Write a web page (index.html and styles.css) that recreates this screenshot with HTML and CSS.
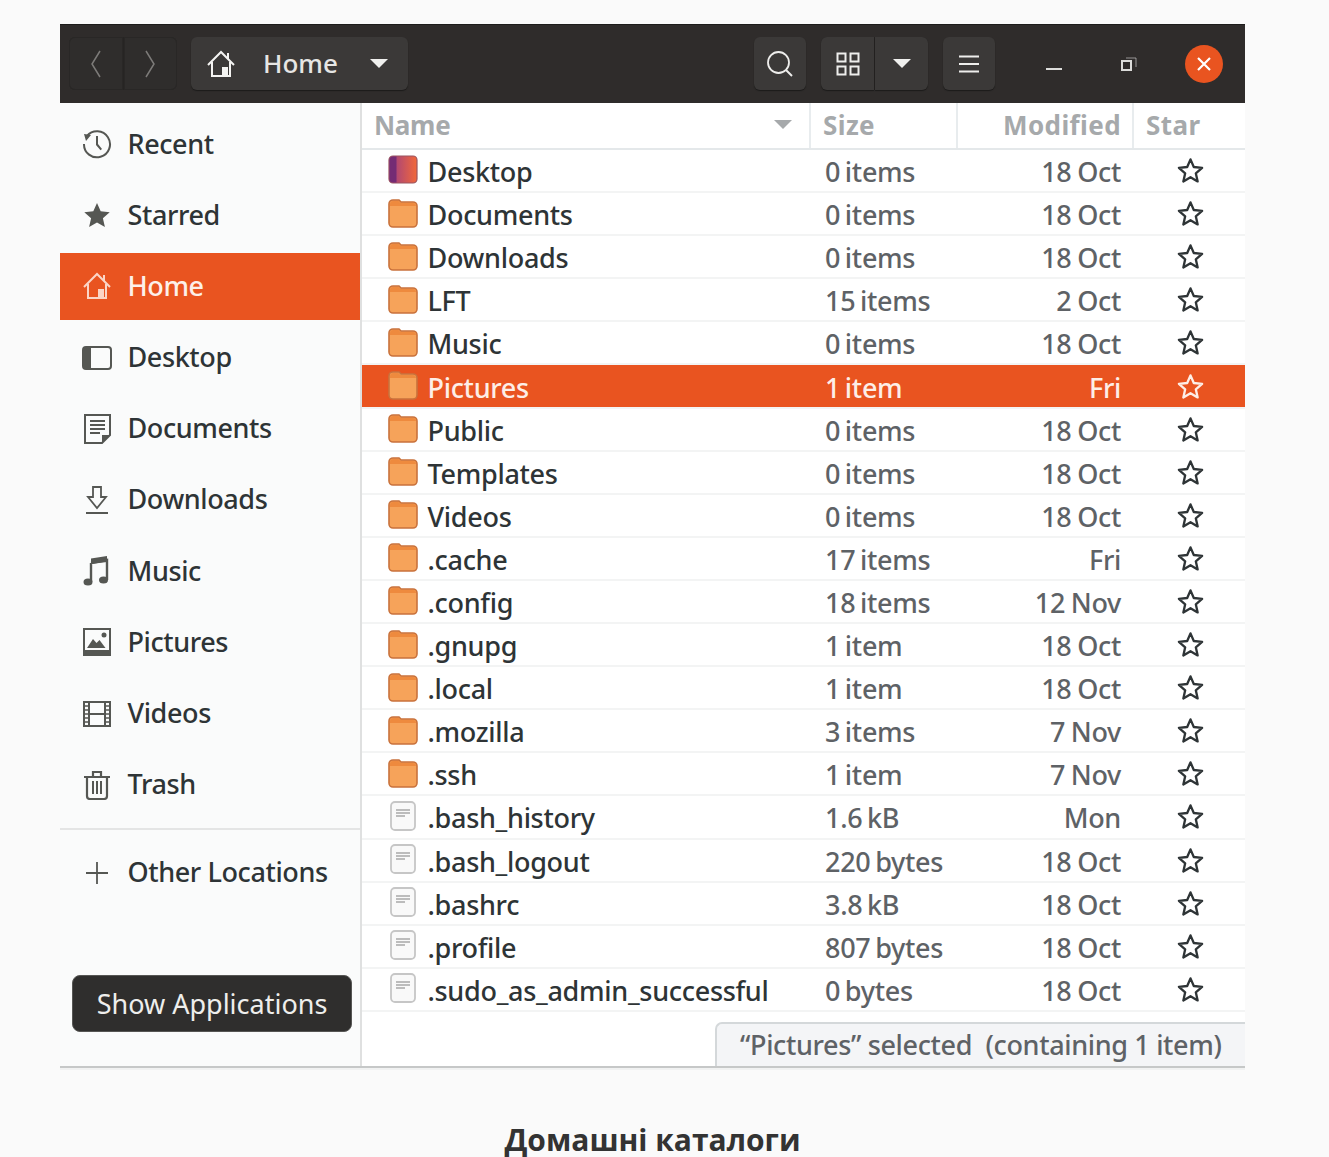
FILE: index.html
```html
<!DOCTYPE html>
<html lang="uk">
  <head>
    <meta charset="utf-8" />
    <title>Домашні каталоги</title>
    <link rel="stylesheet" href="styles.css">
  </head>
  <body>
    <svg class="defs" width="0" height="0">
      <defs>
        <linearGradient id="desk-grad" x1="0" x2="1" y1="0" y2="0">
          <stop offset="0" stop-color="#9a3c86" />
          <stop offset="1" stop-color="#f2683a" />
        </linearGradient>
        <symbol id="i-home" viewBox="0 0 30 30">
          <path d="M2 16 15 3l13 13M6 13v14h18V13M22 4v6" fill="none" stroke="currentColor" stroke-width="2" />
          <path d="M16 18h6v9h-6z" fill="currentColor" />
        </symbol>
        <symbol id="i-recent" viewBox="0 0 30 30">
          <path d="M5 7a13 13 0 1 1-3 8" fill="none" stroke="currentColor" stroke-width="2" />
          <path d="M2 5l7 1-5 6zM14 7h2v8l4 5-1.500 1.200L14 16z" fill="currentColor" />
        </symbol>
        <symbol id="i-starred" viewBox="0 0 30 30">
          <path d="M15 3l3.700 8.300 9 .9-6.800 6 2 8.800L15 22.400 7.100 27l2-8.800-6.800-6 9-.9z" fill="currentColor" />
        </symbol>
        <symbol id="i-desktop" viewBox="0 0 30 30">
          <rect x="1" y="4" width="28" height="22" rx="3" fill="none" stroke="currentColor" stroke-width="2" />
          <path d="M3 4h6v22H3a2 2 0 0 1-2-2V6a2 2 0 0 1 2-2z" fill="currentColor" />
        </symbol>
        <symbol id="i-docs" viewBox="0 0 30 30">
          <path d="M3 1h25v20l-8 8H3z" fill="none" stroke="currentColor" stroke-width="2" />
          <path d="M8 6h15v2H8zM8 10h15v2H8zM8 14h15v2H8zM8 18h10v2H8zM20 29v-8h8z" fill="currentColor" />
        </symbol>
        <symbol id="i-down" viewBox="0 0 30 30">
          <path d="M11 2h8v10h5l-9 11-9-11h5z" fill="none" stroke="currentColor" stroke-width="1.800" />
          <path d="M4 27h22v2H4z" fill="currentColor" />
        </symbol>
        <symbol id="i-music" viewBox="0 0 30 30">
          <path d="M9 7l16-3v20M9 7v19" fill="none" stroke="currentColor" stroke-width="2.400" />
          <path d="M9 2.500l16-2.500v6L9 8z" fill="currentColor" />
          <ellipse cx="6" cy="26" rx="4.500" ry="3.500" fill="currentColor" />
          <ellipse cx="21.500" cy="24" rx="4.500" ry="3.500" fill="currentColor" />
        </symbol>
        <symbol id="i-pics" viewBox="0 0 30 30">
          <rect x="2" y="2" width="26" height="26" fill="none" stroke="currentColor" stroke-width="2" />
          <path d="M2 23h26v5H2zM5 21l6-9 3.500 4 3-3 6 8z" fill="currentColor" />
          <circle cx="22" cy="8" r="2.500" fill="currentColor" />
        </symbol>
        <symbol id="i-videos" viewBox="0 0 30 30">
          <path d="M2 3h26v24H2zM7 3v24M23 3v24M7 15h16" fill="none" stroke="currentColor" stroke-width="2" />
          <path d="M2 7h5M2 11h5M2 15h5M2 19h5M2 23h5M23 7h5M23 11h5M23 15h5M23 19h5M23 23h5" stroke="currentColor" stroke-width="1.500" />
        </symbol>
        <symbol id="i-trash" viewBox="0 0 30 30">
          <path d="M5 8v18a3 3 0 0 0 3 3h14a3 3 0 0 0 3-3V8M2 7h26M11 6V2h8v4" fill="none" stroke="currentColor" stroke-width="2.200" />
          <path d="M10 11h2v13h-2zM14 11h2v13h-2zM18 11h2v13h-2z" fill="currentColor" />
        </symbol>
        <symbol id="i-plus" viewBox="0 0 30 30">
          <path d="M15 4v22M4 15h22" stroke="currentColor" stroke-width="1.800" />
        </symbol>
        <symbol id="i-folder" viewBox="0 0 30 30">
          <path d="M1 6a4 4 0 0 1 4-4h6l2 2h12a4 4 0 0 1 4 4v17a4 4 0 0 1-4 4H5a4 4 0 0 1-4-4z" fill="#f6a35a" stroke="#c9723c" stroke-width="1.600" />
          <path d="M2 8V6a3 3 0 0 1 3-3h5.500l2 2H25a3 3 0 0 1 3 3z" fill="#ee8a3e" />
        </symbol>
        <symbol id="i-deskdir" viewBox="0 0 30 30">
          <rect x="1" y="1" width="28" height="27" rx="4" fill="url(#desk-grad)" stroke="#9a5560" stroke-width="1.200" />
          <path d="M5 1.500H8.500v26H5a3.500 3.500 0 0 1-3.500-3.500V5A3.500 3.500 0 0 1 5 1.500z" fill="#742c74" />
        </symbol>
        <symbol id="i-file" viewBox="0 0 30 30">
          <rect x="3" y="1" width="24" height="28" rx="4" fill="#f9f9f9" stroke="#c6c6c6" stroke-width="1.800" />
          <path d="M8 9h14M8 12h14M8 15h9" stroke="#a8a8a8" stroke-width="1.300" />
        </symbol>
        <symbol id="i-star" viewBox="0 0 30 30">
          <path d="M15 3.500l3.400 7.900 8.600.8-6.500 5.700 1.900 8.400-7.400-4.400-7.400 4.400 1.900-8.400L3 12.200l8.600-.8z" fill="none" stroke="currentColor" stroke-width="2.400" stroke-linejoin="round" />
        </symbol>
      </defs>
    </svg>

    <div class="window">
      <header class="topbar">
        <div class="btn-group nav-group">
          <button class="tb-btn">
            <svg width="14" height="30" viewBox="0 0 14 30"><path d="M11 2 3 15l8 13" fill="none" stroke="currentColor" stroke-width="1.500" /></svg>
          </button>
          <button class="tb-btn">
            <svg width="14" height="30" viewBox="0 0 14 30"><path d="M3 2l8 13-8 13" fill="none" stroke="currentColor" stroke-width="1.500" /></svg>
          </button>
        </div>
        <button class="tb-btn path-btn">
          <svg class="path-home" width="30" height="30"><use href="#i-home" /></svg>
          <span class="path-label">Home</span>
          <span class="caret"></span>
        </button>
        <div class="tb-right">
          <button class="tb-btn square narrow">
            <svg width="28" height="28" viewBox="0 0 28 28"><circle cx="12.500" cy="12.500" r="10.500" fill="none" stroke="currentColor" stroke-width="1.800" /><path d="M20 20l6 6" stroke="currentColor" stroke-width="2" /></svg>
          </button>
          <div class="btn-group">
            <button class="tb-btn square">
              <svg width="24" height="24" viewBox="0 0 24 24"><path d="M1.500 1.500h8v8h-8zM14.500 1.500h8v8h-8zM1.500 14.500h8v8h-8zM14.500 14.500h8v8h-8z" fill="none" stroke="currentColor" stroke-width="2" /></svg>
            </button>
            <button class="tb-btn square"><span class="caret"></span></button>
          </div>
          <button class="tb-btn square narrow menu-btn">
            <svg width="20" height="20" viewBox="0 0 20 20"><path d="M0 2.500h20M0 10h20M0 17.500h20" stroke="currentColor" stroke-width="1.800" /></svg>
          </button>
          <div class="win-btn">
            <svg width="16" height="16" viewBox="0 0 16 16"><path d="M0 13h16" stroke="currentColor" stroke-width="2" /></svg>
          </div>
          <div class="win-btn">
            <svg width="16" height="16" viewBox="0 0 16 16"><path d="M1 5h9v9H1z" fill="none" stroke="currentColor" stroke-width="2" /><path d="M5 2h10v9" fill="none" stroke="currentColor" stroke-width="1" opacity=".6" /></svg>
          </div>
          <div class="win-btn">
            <span class="close-dot">
              <svg width="14" height="14" viewBox="0 0 14 14"><path d="M1 1l12 12M13 1 1 13" stroke="#fff" stroke-width="2.200" /></svg>
            </span>
          </div>
        </div>
      </header>

      <div class="content">
        <aside class="sidebar">
          <a class="side-item"><svg class="side-icon"><use href="#i-recent" /></svg>Recent</a>
          <a class="side-item"><svg class="side-icon"><use href="#i-starred" /></svg>Starred</a>
          <a class="side-item active"><svg class="side-icon"><use href="#i-home" /></svg>Home</a>
          <a class="side-item"><svg class="side-icon"><use href="#i-desktop" /></svg>Desktop</a>
          <a class="side-item"><svg class="side-icon"><use href="#i-docs" /></svg>Documents</a>
          <a class="side-item"><svg class="side-icon"><use href="#i-down" /></svg>Downloads</a>
          <a class="side-item"><svg class="side-icon"><use href="#i-music" /></svg>Music</a>
          <a class="side-item"><svg class="side-icon"><use href="#i-pics" /></svg>Pictures</a>
          <a class="side-item"><svg class="side-icon"><use href="#i-videos" /></svg>Videos</a>
          <a class="side-item"><svg class="side-icon"><use href="#i-trash" /></svg>Trash</a>
          <hr class="side-sep" />
          <a class="side-item other"><svg class="side-icon"><use href="#i-plus" /></svg>Other Locations</a>
          <div class="show-apps">Show Applications</div>
        </aside>

        <main class="files">
          <div class="row head">
            <div class="col-name">Name<span class="sort-caret"></span></div>
            <div class="col-size">Size</div>
            <div class="col-mod">Modified</div>
            <div class="col-star">Star</div>
          </div>

          <div class="row"><div class="col-name"><svg class="file-icon"><use href="#i-deskdir" /></svg>Desktop</div><div class="col-size">0 items</div><div class="col-mod">18 Oct</div><div class="col-star"><svg class="star"><use href="#i-star" /></svg></div></div>
          <div class="row"><div class="col-name"><svg class="file-icon"><use href="#i-folder" /></svg>Documents</div><div class="col-size">0 items</div><div class="col-mod">18 Oct</div><div class="col-star"><svg class="star"><use href="#i-star" /></svg></div></div>
          <div class="row"><div class="col-name"><svg class="file-icon"><use href="#i-folder" /></svg>Downloads</div><div class="col-size">0 items</div><div class="col-mod">18 Oct</div><div class="col-star"><svg class="star"><use href="#i-star" /></svg></div></div>
          <div class="row"><div class="col-name"><svg class="file-icon"><use href="#i-folder" /></svg>LFT</div><div class="col-size">15 items</div><div class="col-mod">2 Oct</div><div class="col-star"><svg class="star"><use href="#i-star" /></svg></div></div>
          <div class="row"><div class="col-name"><svg class="file-icon"><use href="#i-folder" /></svg>Music</div><div class="col-size">0 items</div><div class="col-mod">18 Oct</div><div class="col-star"><svg class="star"><use href="#i-star" /></svg></div></div>
          <div class="row selected"><div class="col-name"><svg class="file-icon"><use href="#i-folder" /></svg>Pictures</div><div class="col-size">1 item</div><div class="col-mod">Fri</div><div class="col-star"><svg class="star"><use href="#i-star" /></svg></div></div>
          <div class="row"><div class="col-name"><svg class="file-icon"><use href="#i-folder" /></svg>Public</div><div class="col-size">0 items</div><div class="col-mod">18 Oct</div><div class="col-star"><svg class="star"><use href="#i-star" /></svg></div></div>
          <div class="row"><div class="col-name"><svg class="file-icon"><use href="#i-folder" /></svg>Templates</div><div class="col-size">0 items</div><div class="col-mod">18 Oct</div><div class="col-star"><svg class="star"><use href="#i-star" /></svg></div></div>
          <div class="row"><div class="col-name"><svg class="file-icon"><use href="#i-folder" /></svg>Videos</div><div class="col-size">0 items</div><div class="col-mod">18 Oct</div><div class="col-star"><svg class="star"><use href="#i-star" /></svg></div></div>
          <div class="row"><div class="col-name"><svg class="file-icon"><use href="#i-folder" /></svg>.cache</div><div class="col-size">17 items</div><div class="col-mod">Fri</div><div class="col-star"><svg class="star"><use href="#i-star" /></svg></div></div>
          <div class="row"><div class="col-name"><svg class="file-icon"><use href="#i-folder" /></svg>.config</div><div class="col-size">18 items</div><div class="col-mod">12 Nov</div><div class="col-star"><svg class="star"><use href="#i-star" /></svg></div></div>
          <div class="row"><div class="col-name"><svg class="file-icon"><use href="#i-folder" /></svg>.gnupg</div><div class="col-size">1 item</div><div class="col-mod">18 Oct</div><div class="col-star"><svg class="star"><use href="#i-star" /></svg></div></div>
          <div class="row"><div class="col-name"><svg class="file-icon"><use href="#i-folder" /></svg>.local</div><div class="col-size">1 item</div><div class="col-mod">18 Oct</div><div class="col-star"><svg class="star"><use href="#i-star" /></svg></div></div>
          <div class="row"><div class="col-name"><svg class="file-icon"><use href="#i-folder" /></svg>.mozilla</div><div class="col-size">3 items</div><div class="col-mod">7 Nov</div><div class="col-star"><svg class="star"><use href="#i-star" /></svg></div></div>
          <div class="row"><div class="col-name"><svg class="file-icon"><use href="#i-folder" /></svg>.ssh</div><div class="col-size">1 item</div><div class="col-mod">7 Nov</div><div class="col-star"><svg class="star"><use href="#i-star" /></svg></div></div>
          <div class="row"><div class="col-name"><svg class="file-icon"><use href="#i-file" /></svg>.bash_history</div><div class="col-size">1.6 kB</div><div class="col-mod">Mon</div><div class="col-star"><svg class="star"><use href="#i-star" /></svg></div></div>
          <div class="row"><div class="col-name"><svg class="file-icon"><use href="#i-file" /></svg>.bash_logout</div><div class="col-size">220 bytes</div><div class="col-mod">18 Oct</div><div class="col-star"><svg class="star"><use href="#i-star" /></svg></div></div>
          <div class="row"><div class="col-name"><svg class="file-icon"><use href="#i-file" /></svg>.bashrc</div><div class="col-size">3.8 kB</div><div class="col-mod">18 Oct</div><div class="col-star"><svg class="star"><use href="#i-star" /></svg></div></div>
          <div class="row"><div class="col-name"><svg class="file-icon"><use href="#i-file" /></svg>.profile</div><div class="col-size">807 bytes</div><div class="col-mod">18 Oct</div><div class="col-star"><svg class="star"><use href="#i-star" /></svg></div></div>
          <div class="row"><div class="col-name"><svg class="file-icon"><use href="#i-file" /></svg>.sudo_as_admin_successful</div><div class="col-size">0 bytes</div><div class="col-mod">18 Oct</div><div class="col-star"><svg class="star"><use href="#i-star" /></svg></div></div>

          <div class="status-pill">“Pictures” selected&nbsp; (containing 1 item)</div>
        </main>
      </div>
    </div>

    <p class="caption">Домашні каталоги</p>
  </body>
</html>
```

FILE: styles.css
```css
html,
body {
  margin: 0;
  height: 1157px;
  overflow: hidden;
}
body {
  background-color: #fafafa;
  padding: 24px 84px 0 60px;
  box-sizing: border-box;
  font-family: "Noto Sans", sans-serif;
  font-weight: 500;
  color: #2e3436;
}
.defs {
  position: absolute;
}

.window {
  height: 1044px;
  display: flex;
  flex-direction: column;
  border-bottom: 2px solid #c6c8c8;
  box-shadow: 0 2px 0 #f1f2f2;
  box-sizing: border-box;
}

/* top bar */
.topbar {
  height: 79px;
  flex: none;
  box-sizing: border-box;
  padding: 12px 4px 0 9px;
  display: flex;
  align-items: flex-start;
  gap: 14px;
  background-color: #2f2c2b;
  border-top: 1px solid #1d1c1b;
  color: #eeeeec;
}
.tb-btn {
  height: 53px;
  border: none;
  padding: 0;
  color: inherit;
  background-color: #3b3938;
  border-radius: 6px;
  box-shadow: 0 1px 1px #1c1b1a;
  display: flex;
  align-items: center;
  justify-content: center;
}
.btn-group {
  display: flex;
  gap: 1px;
  background-color: #262423;
  border-radius: 6px;
}
.btn-group .tb-btn {
  border-radius: 0;
}
.btn-group .tb-btn:first-child {
  border-radius: 6px 0 0 6px;
}
.btn-group .tb-btn:last-child {
  border-radius: 0 6px 6px 0;
}
.nav-group .tb-btn {
  width: 53.5px;
  background-color: #2f2d2c;
  color: #7d7b79;
  box-shadow: inset 0 0 0 1px #292726;
}
.path-btn {
  width: 217px;
  padding: 0 20px 0 15px;
  box-sizing: border-box;
  justify-content: flex-start;
}
.path-home {
  color: #f4f4f2;
}
.path-label {
  margin-left: 27px;
  padding-bottom: 2px;
  font-family: "Noto Sans", sans-serif;
  font-weight: 500;
  font-size: 26px;
  color: #e6e6e4;
  flex: 1;
  text-align: left;
}
.caret {
  width: 0;
  height: 0;
  border-left: 9.5px solid transparent;
  border-right: 9.5px solid transparent;
  border-top: 9.5px solid #f0f0ee;
}
.tb-right {
  margin-left: auto;
  display: flex;
  align-items: flex-start;
  gap: 15px;
}
.square {
  width: 53px;
}
.square.narrow {
  width: 52px;
}
.menu-btn {
  margin-right: 6px;
}
.win-btn {
  width: 75px;
  margin-left: -15px;
  height: 53px;
  display: flex;
  align-items: center;
  justify-content: center;
  color: #dcdcda;
}
.menu-btn + .win-btn {
  margin-left: 0;
}
.close-dot {
  width: 38px;
  height: 38px;
  border-radius: 50%;
  background-color: #e95420;
  display: flex;
  align-items: center;
  justify-content: center;
}

.content {
  flex: 1;
  display: flex;
  min-height: 0;
}

/* sidebar */
.sidebar {
  width: 300px;
  flex: none;
  box-sizing: border-box;
  padding-top: 7.5px;
  display: flex;
  flex-direction: column;
  background-color: #fafbfb;
}
.side-item {
  height: 67px;
  flex: none;
  box-sizing: border-box;
  margin-bottom: 4.2px;
  padding: 0 0 2px 22px;
  display: flex;
  align-items: center;
  gap: 15.5px;
  font-size: 27px;
  letter-spacing: -0.4px;
  color: #2e3436;
}
.side-icon {
  width: 30px;
  height: 30px;
  margin-top: 2px;
  color: #555753;
}
.side-item.active {
  background-color: #e95420;
  color: #fdf0ea;
}
.side-item.active .side-icon {
  color: #fbd5c6;
}
.side-sep {
  width: 100%;
  margin: 6px 0 0;
  border: none;
  border-top: 2px solid #e4e5e5;
}
.other {
  margin-top: 9px;
}
.show-apps {
  margin: auto 8px 34px 12px;
  height: 57px;
  box-sizing: border-box;
  display: flex;
  align-items: center;
  justify-content: center;
  background-color: #2f2e2d;
  border: 1px solid #565654;
  border-radius: 8px;
  color: #eeeeec;
  font-size: 27px;
  font-weight: 400;
}

/* file list */
.files {
  flex: 1;
  position: relative;
  background-color: #ffffff;
  border-left: 2px solid #dfe0e0;
}
.row {
  height: 43.1px;
  box-sizing: border-box;
  display: grid;
  grid-template-columns: 449px 147px 176px 1fr;
  align-items: center;
  font-size: 27px;
  letter-spacing: -0.3px;
  border-bottom: 2px solid #f3f4f4;
}
.col-name {
  display: flex;
  align-items: center;
  padding: 2px 0 0 25.5px;
  white-space: nowrap;
}
.file-icon {
  width: 30px;
  height: 30px;
  margin: -4px 10px 0 0;
  flex: none;
}
.col-size {
  padding: 2px 0 0 14px;
  color: #5e6266;
  white-space: nowrap;
  word-spacing: -2px;
}
.col-mod {
  padding: 2px 13px 0 0;
  text-align: right;
  color: #5e6266;
  word-spacing: -1px;
}
.col-star {
  display: flex;
  justify-content: flex-start;
  padding-left: 41.5px;
  color: #2e3436;
}
.star {
  width: 29px;
  height: 29px;
}
.row.selected {
  background-color: #e95420;
  color: #fdeee7;
}
.row.selected .col-size,
.row.selected .col-mod,
.row.selected .col-star {
  color: #fdeee7;
}

/* column headers */
.row.head {
  height: 47px;
  border-bottom: 2px solid #e4e8ea;
  font-size: 26px;
  font-weight: 700;
  letter-spacing: 0.4px;
}
.row.head > div {
  height: 100%;
  box-sizing: border-box;
  display: flex;
  align-items: center;
  padding-top: 0;
  padding-bottom: 2px;
  color: #a6a9ab;
  border-right: 2px solid #e8ecee;
}
.row.head > div:last-child {
  border-right: none;
}
.row.head .col-name {
  padding-left: 12px;
  letter-spacing: -0.3px;
}
.row.head .col-size {
  padding-left: 12px;
}
.row.head .col-mod {
  justify-content: flex-end;
  padding-right: 11px;
}
.row.head .col-star {
  padding-left: 12px;
}
.sort-caret {
  margin-left: auto;
  margin-right: 17px;
  border-left: 9.5px solid transparent;
  border-right: 9.5px solid transparent;
  border-top: 9.5px solid #a6a9ab;
}

.status-pill {
  position: absolute;
  right: 0;
  bottom: 0;
  width: 530px;
  height: 44px;
  box-sizing: border-box;
  padding: 0 0 2px 23px;
  display: flex;
  align-items: center;
  background-color: #f4f5f7;
  border: 2px solid #d4d8da;
  border-bottom: none;
  border-right: none;
  border-radius: 7px 0 0 0;
  color: #5e6266;
  font-size: 27px;
  letter-spacing: -0.35px;
  white-space: nowrap;
}

.caption {
  margin: 55px 0 0;
  text-align: center;
  font-family: "Open Sans", sans-serif;
  font-weight: 700;
  font-size: 30px;
  line-height: 34px;
  color: #333333;
}
```
